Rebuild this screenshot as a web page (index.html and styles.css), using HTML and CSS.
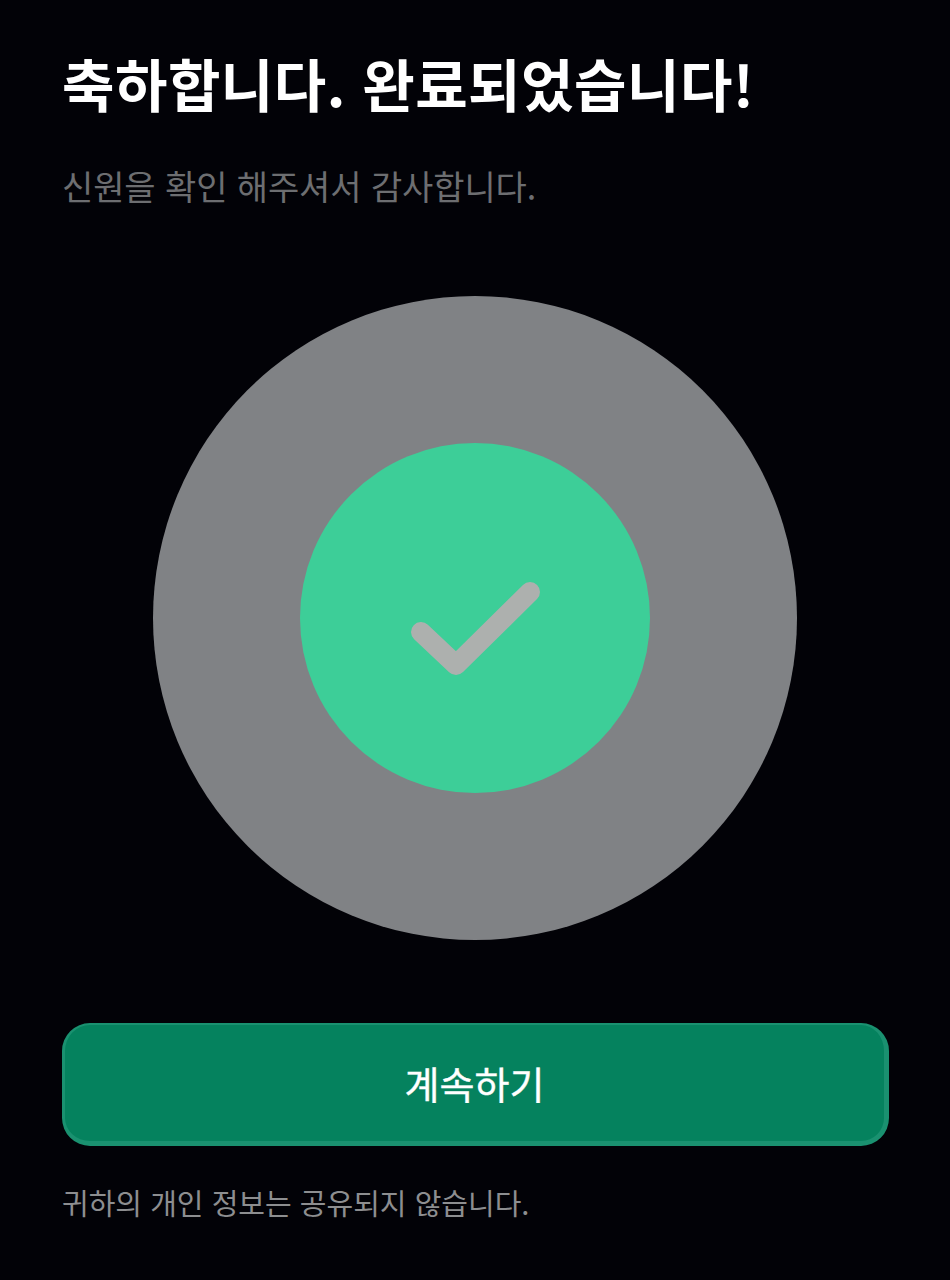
FILE: index.html
```html
<!DOCTYPE html>
<html lang="ko">
<head>
  <meta charset="utf-8">
  <title>완료</title>
  <link rel="stylesheet" href="styles.css">
</head>
<body>
<div class="page">
  <h1 class="title">축하합니다. 완료되었습니다!</h1>
  <p class="subtitle">신원을 확인 해주셔서 감사합니다.</p>

  <div class="status">
    <div class="ring">
      <div class="disc">
        <svg class="check" width="350" height="350" viewBox="0 0 350 350">
          <path d="M121 189 L156 222 L230 149" fill="none" stroke="#adb0ae" stroke-width="20" stroke-linecap="round" stroke-linejoin="round"/>
        </svg>
      </div>
    </div>
  </div>

  <button class="continue-btn" type="button">계속하기</button>
  <p class="note">귀하의 개인 정보는 공유되지 않습니다.</p>
</div>
</body>
</html>
```

FILE: styles.css
```css
html, body {
  margin: 0;
  padding: 0;
  background-color: #020207;
}

.page {
  width: 950px;
  height: 1280px;
  box-sizing: border-box;
  padding: 44px 61px 0 62px;
  font-family: "Noto Sans CJK KR", "Noto Sans", sans-serif;
  overflow: hidden;
}

.title {
  margin: 0;
  font-size: 57px;
  line-height: 76px;
  font-weight: 700;
  letter-spacing: 0.5px;
  color: #ffffff;
}

.subtitle {
  margin: 43px 0 0;
  font-size: 34px;
  line-height: 46px;
  font-weight: 400;
  letter-spacing: -0.1px;
  color: #6d6e71;
}

.status {
  display: flex;
  justify-content: center;
  margin-top: 87px;
  padding-right: 1px;
}

.ring {
  width: 644px;
  height: 644px;
  border-radius: 50%;
  background-color: #808285;
  display: flex;
  align-items: center;
  justify-content: center;
}

.disc {
  width: 350px;
  height: 350px;
  border-radius: 50%;
  background-color: #3dce98;
}

.check {
  display: block;
}

.continue-btn {
  display: block;
  width: 827px;
  height: 123px;
  margin-top: 83px;
  padding: 0 0 2px;
  box-sizing: border-box;
  border-style: solid;
  border-width: 2px 5px 5px 3px;
  border-color: #1a9170;
  border-radius: 28px;
  background-color: #05825e;
  color: #ffffff;
  font-family: inherit;
  font-size: 38px;
  font-weight: 400;
  -webkit-text-stroke: 0.4px #ffffff;
}

.note {
  margin: 35px 0 0;
  font-size: 29px;
  line-height: 42px;
  color: #8d8e90;
}
```
